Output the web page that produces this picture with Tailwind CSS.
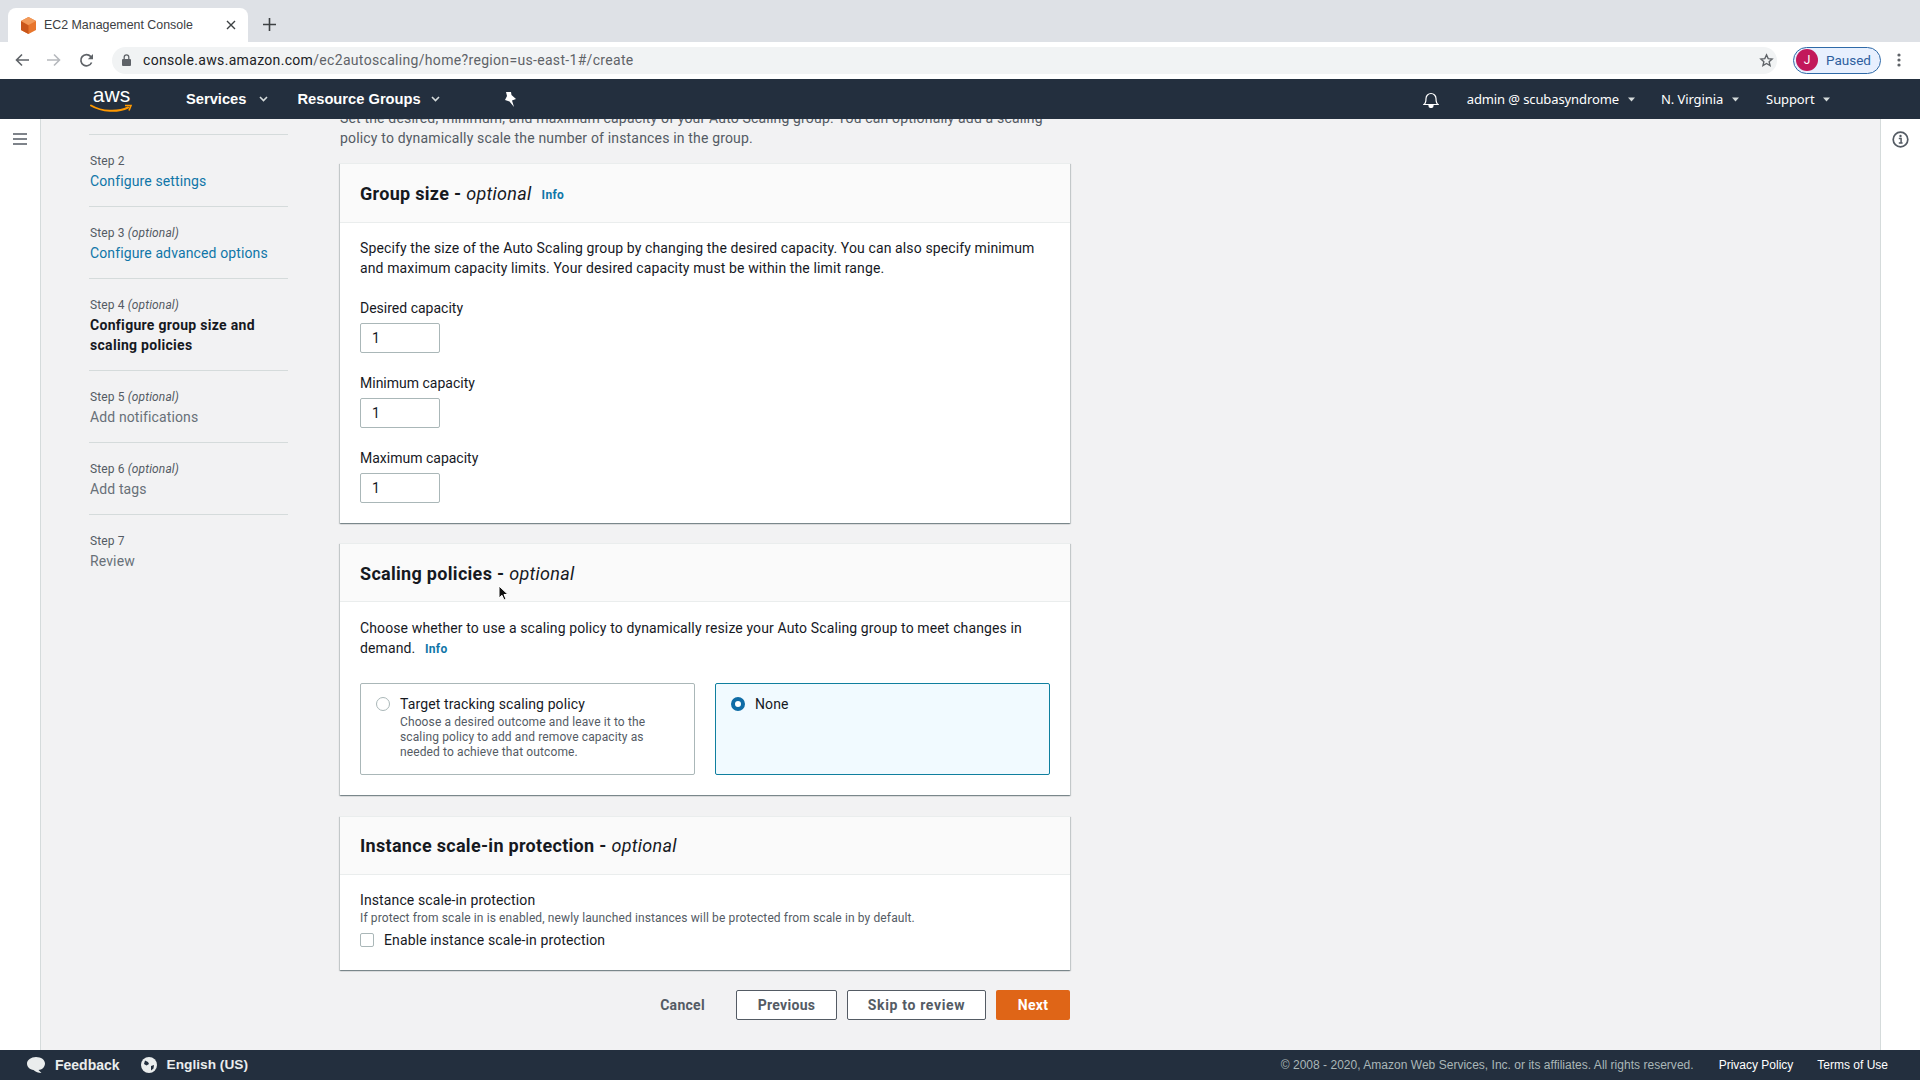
<!DOCTYPE html>
<html lang="en">
<head>
    <meta charset="UTF-8">
    <title>EC2 Management Console</title>
    <script src="https://cdn.jsdelivr.net/npm/@tailwindcss/browser@4"></script>
</head>
<body class="h-screen w-screen overflow-hidden flex flex-col bg-[#f2f2f3] font-['Roboto',sans-serif] text-[14px] leading-[20px] text-[#16191f]">

    <!-- Browser tab strip -->
    <div class="h-[42px] shrink-0 bg-[#dee1e6] flex items-end pl-2">
        <div class="w-[240px] h-[34px] bg-white rounded-t-lg flex items-center pl-3 pr-3">
            <svg class="w-[17px] h-[17px] shrink-0" viewBox="0 0 17 17"><path fill="#e8762d" d="M8.5 0 16 4v9l-7.5 4L1 13V4z"/><path fill="#c9561a" d="M8.5 8.5V17L1 13V4z"/><path fill="#f29a5a" d="M8.5 0 16 4 8.5 8 1 4z"/></svg>
            <span class="ml-[7px] text-[12.4px] text-[#3c4043] font-['Liberation_Sans',sans-serif]">EC2 Management Console</span>
            <svg class="w-[10px] h-[10px] ml-auto" viewBox="0 0 10 10" stroke="#3c4043" stroke-width="1.4"><path d="M1 1l8 8M9 1l-8 8"/></svg>
        </div>
        <svg class="w-[13px] h-[13px] ml-[15px] mb-[11px]" viewBox="0 0 13 13" stroke="#3c4043" stroke-width="1.6"><path d="M6.5 0v13M0 6.5h13"/></svg>
    </div>

    <!-- Browser toolbar -->
    <div class="h-[37px] shrink-0 bg-white flex items-center pl-[15px] pr-[18px] pb-[1px]">
        <svg class="w-[14px] h-[14px]" viewBox="0 0 14 14" fill="none" stroke="#5f6368" stroke-width="1.6"><path d="M14 7H1.5M7 1.5 1.5 7 7 12.5"/></svg>
        <svg class="w-[14px] h-[14px] ml-[18px]" viewBox="0 0 14 14" fill="none" stroke="#b6b9bd" stroke-width="1.6"><path d="M0 7h12.5M7 1.5 12.5 7 7 12.5"/></svg>
        <svg class="w-[15px] h-[15px] ml-[18px]" viewBox="0 0 15 15" fill="none" stroke="#5f6368" stroke-width="1.7"><path d="M12.6 9.5A5.6 5.6 0 1 1 11.6 3.4L13 5"/><path fill="#5f6368" stroke="none" d="M14 1v5.2H8.8z"/></svg>
        <div class="ml-[18px] w-[1665px] h-[27px] rounded-full bg-[#f1f3f4] flex items-center pl-[10px] pr-[3px]">
            <svg class="w-[9px] h-[12px]" viewBox="0 0 9 12"><path fill="#5f6368" d="M1 5h7a1 1 0 0 1 1 1v5a1 1 0 0 1-1 1H1a1 1 0 0 1-1-1V6a1 1 0 0 1 1-1z"/><path fill="none" stroke="#5f6368" stroke-width="1.3" d="M2.2 5V3.2a2.3 2.3 0 0 1 4.6 0V5"/></svg>
            <span class="ml-[12px] text-[14px] tracking-[0.32px] text-[#5f6368]"><span class="text-[#202124]">console.aws.amazon.com</span>/ec2autoscaling/home?region=us-east-1#/create</span>
            <svg class="w-[15px] h-[15px] ml-auto" viewBox="0 0 24 24" fill="none" stroke="#5f6368" stroke-width="2.2"><path d="m12 3 2.7 6 6.3.6-4.8 4.2 1.5 6.4L12 16.8l-5.700 3.400 1.500-6.400L3 9.600 9.300 9z"/></svg>
        </div>
        <div class="ml-[16px] w-[88px] h-[27px] shrink-0 rounded-full border border-[#2f6aa8] bg-[#e8f0fe] flex items-center pl-[2px]">
            <span class="w-[22px] h-[22px] rounded-full bg-[#c2185b] text-white text-[12px] flex items-center justify-center">J</span>
            <span class="ml-[8px] text-[13.5px] text-[#2f5f9e]">Paused</span>
        </div>
        <svg class="w-[4px] h-[14px] ml-[16px]" viewBox="0 0 4 14" fill="#5f6368"><circle cx="2" cy="2" r="1.6"/><circle cx="2" cy="7" r="1.6"/><circle cx="2" cy="12" r="1.6"/></svg>
    </div>

    <!-- AWS nav -->
    <div class="h-[40px] shrink-0 bg-[#232f3e] flex items-center text-white pl-[90px]">
        <div class="w-[43px] h-[27px] flex flex-col items-center">
            <span class="text-[21px] leading-[18px] font-['Liberation_Sans',sans-serif]">aws</span>
            <svg class="w-[43px] h-[9px]" viewBox="0 0 43 9" fill="none"><path d="M1 1.500C12 8 28 8.500 38 3.500" stroke="#f90" stroke-width="2" stroke-linecap="round"/><path d="M35 1.500h6l-2 5" stroke="#f90" stroke-width="1.600"/></svg>
        </div>
        <span class="ml-[53px] text-[14.7px] font-bold font-['Liberation_Sans',sans-serif]">Services</span>
        <svg class="w-[9px] h-[6px] ml-[13px]" viewBox="0 0 9 6" fill="none" stroke="#d5dbdb" stroke-width="1.600"><path d="m1 1 3.500 3.500L8 1"/></svg>
        <span class="ml-[29px] text-[14.7px] font-bold font-['Liberation_Sans',sans-serif]">Resource Groups</span>
        <svg class="w-[9px] h-[6px] ml-[10px]" viewBox="0 0 9 6" fill="none" stroke="#d5dbdb" stroke-width="1.600"><path d="m1 1 3.500 3.500L8 1"/></svg>
        <svg class="w-[14px] h-[15px] ml-[63px]" viewBox="0 0 14 15" fill="#fff"><path d="M3 0h5l.5 3L13 7l-4 1.500L11 15 6.500 9.500 2 8l2-4z"/></svg>
        <svg class="w-[16px] h-[18px] ml-[906px]" viewBox="0 0 16 18" fill="none" stroke="#fff" stroke-width="1.200"><path d="M1 14.500c2-1.500 2-3 2-6a5 5 0 0 1 10 0c0 3 0 4.500 2 6z"/><path fill="#fff" d="M6 15.500a2 2 0 0 0 4 0z"/></svg>
        <span class="ml-[28px] text-[13px] tracking-[-0.1px] font-['Noto_Sans',sans-serif]">admin @ scubasyndrome</span>
        <svg class="w-[7px] h-[5px] ml-[9px]" viewBox="0 0 7 5" fill="#d5dbdb"><path d="M0 .5h7L3.500 4.500z"/></svg>
        <span class="ml-[26px] text-[13px] tracking-[-0.1px] font-['Noto_Sans',sans-serif]">N. Virginia</span>
        <svg class="w-[7px] h-[5px] ml-[9px]" viewBox="0 0 7 5" fill="#d5dbdb"><path d="M0 .5h7L3.500 4.500z"/></svg>
        <span class="ml-[27px] text-[13px] tracking-[-0.1px] font-['Noto_Sans',sans-serif]">Support</span>
        <svg class="w-[7px] h-[5px] ml-[9px]" viewBox="0 0 7 5" fill="#d5dbdb"><path d="M0 .5h7L3.500 4.500z"/></svg>
    </div>

    <!-- Console body -->
    <div class="flex-1 min-h-0 flex relative overflow-hidden tracking-[0.12px]">
        <!-- Collapsed nav rail left -->
        <div class="w-[41px] shrink-0 bg-white border-r border-[#d5dbdb] pt-[14px] pl-[13px]">
            <svg class="w-[14px] h-[12px]" viewBox="0 0 14 12" stroke="#545b64" stroke-width="1.500"><path d="M0 1h14M0 6h14M0 11h14"/></svg>
        </div>

        <!-- Wizard steps -->
        <div class="w-[199px] shrink-0 ml-[48px] pt-[15px] text-[12px]">
            <div class="border-t border-[#d5dbdb] pl-[1px] pt-[18px] pb-[15px]">
                <div class="leading-[16px] text-[#545b64]">Step 2</div>
                <div class="mt-[2px] text-[14px] text-[#0f76a8]">Configure settings</div>
            </div>
            <div class="border-t border-[#d5dbdb] pl-[1px] pt-[18px] pb-[15px]">
                <div class="leading-[16px] text-[#545b64]">Step 3 <i>(optional)</i></div>
                <div class="mt-[2px] text-[14px] text-[#0f76a8]">Configure advanced options</div>
            </div>
            <div class="border-t border-[#d5dbdb] pl-[1px] pt-[18px] pb-[15px]">
                <div class="leading-[16px] text-[#545b64]">Step 4 <i>(optional)</i></div>
                <div class="mt-[2px] text-[14px] font-bold tracking-[0.3px] text-[#16191f]">Configure group size and<br>scaling policies</div>
            </div>
            <div class="border-t border-[#d5dbdb] pl-[1px] pt-[18px] pb-[15px]">
                <div class="leading-[16px] text-[#545b64]">Step 5 <i>(optional)</i></div>
                <div class="mt-[2px] text-[14px] text-[#687078]">Add notifications</div>
            </div>
            <div class="border-t border-[#d5dbdb] pl-[1px] pt-[18px] pb-[15px]">
                <div class="leading-[16px] text-[#545b64]">Step 6 <i>(optional)</i></div>
                <div class="mt-[2px] text-[14px] text-[#687078]">Add tags</div>
            </div>
            <div class="border-t border-[#d5dbdb] pl-[1px] pt-[18px] pb-[15px]">
                <div class="leading-[16px] text-[#545b64]">Step 7</div>
                <div class="mt-[2px] text-[14px] text-[#687078]">Review</div>
            </div>
        </div>

        <!-- Main form, scrolled -->
        <div class="w-[730px] shrink-0 ml-[52px] -mt-[11px]">
            <p class="text-[#545b64] tracking-[0.17px]">Set the desired, minimum, and maximum capacity of your Auto Scaling group. You can optionally add a scaling<br>policy to dynamically scale the number of instances in the group.</p>

            <section class="mt-[15px] h-[360px] bg-white border-t border-[#eaeded] shadow-[0_1px_1px_0_rgba(0,28,36,.3),1px_1px_1px_0_rgba(0,28,36,.15),-1px_1px_1px_0_rgba(0,28,36,.15)]">
                <div class="h-[59px] bg-[#fafafa] border-b border-[#eaeded] px-5 pt-[1px] flex items-center">
                    <h2 class="text-[18px] leading-[22px] font-bold tracking-[0.3px]">Group size - <i class="font-normal">optional</i></h2>
                    <span class="ml-[10px] mt-[2px] text-[12px] font-bold tracking-[0.3px] text-[#0f76a8]">Info</span>
                </div>
                <div class="px-5 pt-[15px]">
                    <p>Specify the size of the Auto Scaling group by changing the desired capacity. You can also specify minimum<br>and maximum capacity limits. Your desired capacity must be within the limit range.</p>
                    <label class="block mt-[20px] tracking-normal">Desired capacity</label>
                    <div class="mt-[5px] w-[80px] h-[30px] bg-white border border-[#aab7b8] rounded-[2px] pl-[11px] flex items-center">1</div>
                    <label class="block mt-[20px] tracking-normal">Minimum capacity</label>
                    <div class="mt-[5px] w-[80px] h-[30px] bg-white border border-[#aab7b8] rounded-[2px] pl-[11px] flex items-center">1</div>
                    <label class="block mt-[20px] tracking-normal">Maximum capacity</label>
                    <div class="mt-[5px] w-[80px] h-[30px] bg-white border border-[#aab7b8] rounded-[2px] pl-[11px] flex items-center">1</div>
                </div>
            </section>

            <section class="mt-[20px] h-[252px] bg-white border-t border-[#eaeded] shadow-[0_1px_1px_0_rgba(0,28,36,.3),1px_1px_1px_0_rgba(0,28,36,.15),-1px_1px_1px_0_rgba(0,28,36,.15)]">
                <div class="h-[58px] bg-[#fafafa] border-b border-[#eaeded] px-5 pt-[2px] flex items-center">
                    <h2 class="text-[18px] leading-[22px] font-bold tracking-[0.3px]">Scaling policies - <i class="font-normal">optional</i></h2>
                </div>
                <div class="px-5 pt-[16px]">
                    <p>Choose whether to use a scaling policy to dynamically resize your Auto Scaling group to meet changes in<br>demand. <span class="ml-[6px] text-[12px] font-bold tracking-[0.3px] text-[#0f76a8]">Info</span></p>
                    <div class="mt-[24px] flex gap-[20px]">
                        <div class="w-[335px] h-[92px] border border-[#aab7b8] rounded-[2px] bg-white flex pl-[15px] pt-[10px]">
                            <span class="w-[14px] h-[14px] mt-[3px] rounded-full border border-[#aab7b8] bg-white shrink-0"></span>
                            <div class="ml-[10px]">
                                <div>Target tracking scaling policy</div>
                                <p class="mt-[1px] text-[12px] leading-[15px] text-[#545b64]">Choose a desired outcome and leave it to the<br>scaling policy to add and remove capacity as<br>needed to achieve that outcome.</p>
                            </div>
                        </div>
                        <div class="w-[335px] h-[92px] border border-[#0f7f9f] rounded-[2px] bg-[#f1faff] flex pl-[15px] pt-[10px]">
                            <span class="w-[14px] h-[14px] mt-[3px] rounded-full border-[4px] border-[#0f6ca6] bg-white shrink-0"></span>
                            <div class="ml-[10px]">None</div>
                        </div>
                    </div>
                </div>
            </section>

            <section class="mt-[21px] h-[154px] bg-white border-t border-[#eaeded] shadow-[0_1px_1px_0_rgba(0,28,36,.3),1px_1px_1px_0_rgba(0,28,36,.15),-1px_1px_1px_0_rgba(0,28,36,.15)]">
                <div class="h-[58px] bg-[#fafafa] border-b border-[#eaeded] px-5 flex items-center">
                    <h2 class="text-[18px] leading-[22px] font-bold tracking-[0.3px]">Instance scale-in protection - <i class="font-normal">optional</i></h2>
                </div>
                <div class="px-5 pt-[15px]">
                    <div>Instance scale-in protection</div>
                    <p class="text-[12px] leading-[16px] text-[#545b64]">If protect from scale in is enabled, newly launched instances will be protected from scale in by default.</p>
                    <div class="mt-[4px] flex items-center">
                        <span class="w-[14px] h-[14px] border border-[#aab7b8] rounded-[2px] bg-white"></span>
                        <span class="ml-[10px]">Enable instance scale-in protection</span>
                    </div>
                </div>
            </section>

            <div class="mt-[20px] flex items-center justify-end font-bold tracking-[0.3px]">
                <span class="text-[#545b64] mr-[31px]">Cancel</span>
                <span class="w-[101px] h-[30px] border border-[#545b64] rounded-[2px] bg-white text-[#545b64] flex items-center justify-center">Previous</span>
                <span class="ml-[10px] w-[139px] h-[30px] border border-[#545b64] rounded-[2px] bg-white text-[#545b64] tracking-[0.65px] flex items-center justify-center">Skip to review</span>
                <span class="ml-[10px] w-[74px] h-[30px] rounded-[2px] bg-[#df6517] text-white flex items-center justify-center">Next</span>
            </div>
        </div>

        <!-- Right help rail -->
        <div class="ml-auto w-[40px] shrink-0 bg-white border-l border-[#d5dbdb] pt-[12px] pl-[11px]">
            <svg class="w-[17px] h-[17px]" viewBox="0 0 17 17" fill="none"><circle cx="8.500" cy="8.500" r="7.300" stroke="#545b64" stroke-width="1.700"/><circle cx="8.500" cy="5" r="1.200" fill="#545b64"/><path d="M6.800 7.500h2.300v4.200M6.800 12h3.800" stroke="#545b64" stroke-width="1.500"/></svg>
        </div>

        <!-- Mouse pointer from the recording -->
        <svg class="absolute left-[498px] top-[466px] w-[11px] h-[17px]" viewBox="0 0 11 17"><path fill="#111" stroke="#fff" stroke-width="1" d="M1 1v12l3-2.700 2 4.700 2-1-2-4.500h4z"/></svg>
    </div>

    <!-- Footer -->
    <div class="h-[30px] shrink-0 bg-[#232f3e] flex items-center pl-[27px] pr-[32px] text-[14px] font-['Liberation_Sans',sans-serif] text-[#eaeded]">
        <svg class="w-[18px] h-[16px]" viewBox="0 0 18 16" fill="#eaeded"><path d="M9 0c5 0 9 2.800 9 6.500S14.500 13 11.500 13l3 3c-3 0-6-1-8-3C3 12.500 0 10 0 6.500S4 0 9 0z"/></svg>
        <span class="ml-[10px] font-bold">Feedback</span>
        <svg class="w-[16px] h-[16px] ml-[21px]" viewBox="0 0 16 16"><circle cx="8" cy="8" r="8" fill="#eaeded"/><path fill="#232f3e" d="M4 3.500 7 5l1 2-2.500 1.500L3 7zM10 9l3-1-.5 3.500-2.500 2z"/></svg>
        <span class="ml-[10px] text-[13.7px] font-bold">English (US)</span>
        <span class="ml-auto text-[12px] tracking-[0.02px] text-[#aab7b8]">© 2008 - 2020, Amazon Web Services, Inc. or its affiliates. All rights reserved.</span>
        <span class="ml-[25px] text-[12px] text-white">Privacy Policy</span>
        <span class="ml-[24px] text-[12px] text-white">Terms of Use</span>
    </div>
</body>
</html>
